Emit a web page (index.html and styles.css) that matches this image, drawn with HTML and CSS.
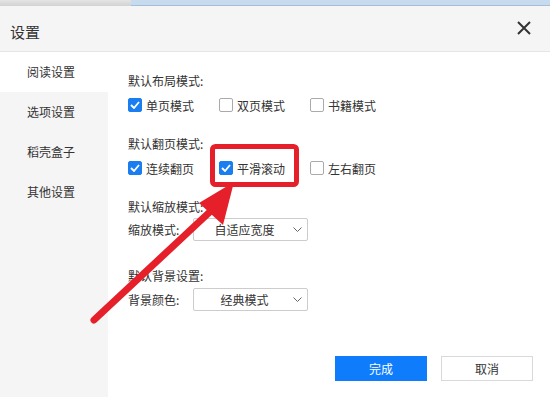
FILE: index.html
```html
<!DOCTYPE html>
<html lang="zh-CN">
<head>
    <meta charset="UTF-8">
    <meta name="viewport" content="width=device-width, initial-scale=1.0">
    <title>设置</title>
    <link rel="stylesheet" href="styles.css">
</head>
<body>
    <div class="topstrip">
        <div class="strip-left"></div>
        <div class="strip-right"></div>
    </div>
    <div class="titlebar">
        <span class="title">设置</span>
        <svg class="close" width="14" height="14" viewBox="0 0 14 14">
            <path d="M1 1L13 13M13 1L1 13" stroke="#333" stroke-width="2" fill="none"/>
        </svg>
    </div>
    <div class="layout">
        <div class="sidebar">
            <div class="nav-item active">阅读设置</div>
            <div class="nav-item">选项设置</div>
            <div class="nav-item">稻壳盒子</div>
            <div class="nav-item">其他设置</div>
        </div>
        <div class="main">
            <div class="group">
                <div class="group-title">默认布局模式:</div>
                <div class="options">
                    <label class="option"><span class="box checked"><svg width="10" height="8" viewBox="0 0 10 8"><path d="M1 4L4 7L9 1" stroke="#fff" stroke-width="1.8" fill="none"/></svg></span>单页模式</label>
                    <label class="option"><span class="box"></span>双页模式</label>
                    <label class="option"><span class="box"></span>书籍模式</label>
                </div>
            </div>
            <div class="group">
                <div class="group-title">默认翻页模式:</div>
                <div class="options">
                    <label class="option"><span class="box checked"><svg width="10" height="8" viewBox="0 0 10 8"><path d="M1 4L4 7L9 1" stroke="#fff" stroke-width="1.8" fill="none"/></svg></span>连续翻页</label>
                    <label class="option"><span class="box checked"><svg width="10" height="8" viewBox="0 0 10 8"><path d="M1 4L4 7L9 1" stroke="#fff" stroke-width="1.8" fill="none"/></svg></span>平滑滚动</label>
                    <label class="option"><span class="box"></span>左右翻页</label>
                </div>
            </div>
            <div class="group group-zoom">
                <div class="group-title">默认缩放模式:</div>
                <div class="field">
                    <span class="field-label">缩放模式:</span>
                    <div class="select">
                        <span class="select-text">自适应宽度</span>
                        <svg width="9" height="5" viewBox="0 0 9 5"><path d="M0.5 0.5L4.5 4.5L8.5 0.5" stroke="#666" stroke-width="1" fill="none"/></svg>
                    </div>
                </div>
            </div>
            <div class="group group-bg">
                <div class="group-title">默认背景设置:</div>
                <div class="field">
                    <span class="field-label">背景颜色:</span>
                    <div class="select">
                        <span class="select-text">经典模式</span>
                        <svg width="9" height="5" viewBox="0 0 9 5"><path d="M0.5 0.5L4.5 4.5L8.5 0.5" stroke="#666" stroke-width="1" fill="none"/></svg>
                    </div>
                </div>
            </div>
            <div class="footer">
                <button class="btn btn-primary">完成</button>
                <button class="btn">取消</button>
            </div>
        </div>
    </div>

    <!-- 标注：红框和箭头 -->
    <svg class="annotation" width="550" height="397" viewBox="0 0 550 397">
        <rect x="212.5" y="146.5" width="84" height="38" rx="3" fill="none" stroke="#e5202a" stroke-width="5"/>
        <line x1="94" y1="320" x2="214" y2="208" stroke="#e5202a" stroke-width="7" stroke-linecap="round"/>
        <polygon points="234,182 199,203 223,225" fill="#e5202a"/>
    </svg>
</body>
</html>
```

FILE: styles.css
```css
/* 页面整体 */
body {
    margin: 0;
    width: 550px;
    height: 397px;
    overflow: hidden;
    position: relative;
    display: flex;
    flex-direction: column;
    font-family: "Noto Sans CJK SC", "Noto Sans", sans-serif;
    font-size: 12px;
    color: #333;
    background: #fff;
}
/* 顶部窗口残留条 */
.topstrip {
    display: flex;
    height: 6px;
}
.strip-left {
    width: 131px;
    background: linear-gradient(#e4e4e4, #d2d2d2);
}
.strip-right {
    flex: 1;
    background: #c7dbee;
    border-bottom: 1px solid #a9bed4;
}
/* 标题栏 */
.titlebar {
    height: 45px;
    background: #f5f5f5;
    border-bottom: 1px solid #e6e6e6;
    display: flex;
    align-items: center;
    justify-content: space-between;
    padding: 0 19px 0 10px;
}
.title {
    font-size: 15px;
    padding-top: 6px;
    color: #333;
}
.close {
    margin-top: -1px;
}
.layout {
    flex: 1;
    display: flex;
}
/* 左侧菜单 */
.sidebar {
    width: 108px;
    background: #f5f5f5;
}
.nav-item {
    height: 40px;
    line-height: 40px;
    padding-left: 27px;
    color: #333;
}
.nav-item.active {
    background: #fff;
}
/* 右侧内容 */
.main {
    flex: 1;
    display: flex;
    flex-direction: column;
    padding: 19px 0 0 20px;
}
.group + .group {
    margin-top: 19px;
}
.group.group-bg {
    margin-top: 25px;
}
.group-title {
    line-height: 20px;
}
.options {
    display: flex;
    gap: 21px;
    margin-top: 4px;
    height: 20px;
    align-items: center;
}
.option {
    display: flex;
    align-items: center;
    gap: 4px;
    width: 70px;
    white-space: nowrap;
}
.box {
    width: 14px;
    height: 14px;
    box-sizing: border-box;
    border: 1px solid #aaa;
    border-radius: 2px;
    background: #fff;
    display: flex;
    align-items: center;
    justify-content: center;
}
.box.checked {
    border-color: #1b7ef0;
    background: #1b7ef0;
}
.field {
    display: flex;
    align-items: center;
    margin-top: 1px;
}
.group-bg .field {
    margin-top: 2px;
}
.field-label {
    width: 65px;
}
.select {
    width: 115px;
    height: 23px;
    box-sizing: border-box;
    border: 1px solid #ccc;
    border-radius: 2px;
    display: flex;
    align-items: center;
    padding: 0 5px 0 8px;
}
.select-text {
    flex: 1;
    text-align: center;
    padding-right: 6px;
}
/* 底部按钮 */
.footer {
    margin-top: auto;
    display: flex;
    justify-content: flex-end;
    gap: 14px;
    padding: 0 17px 16px 0;
}
.btn {
    width: 92px;
    height: 25px;
    border: 1px solid #d9d9d9;
    background: #fff;
    color: #333;
    font-family: inherit;
    font-size: 12px;
    padding: 0;
}
.btn-primary {
    background: #0f7cfc;
    border-color: #0f7cfc;
    color: #fff;
}
/* 标注层 */
.annotation {
    position: absolute;
    top: 0;
    left: 0;
    pointer-events: none;
}
```
